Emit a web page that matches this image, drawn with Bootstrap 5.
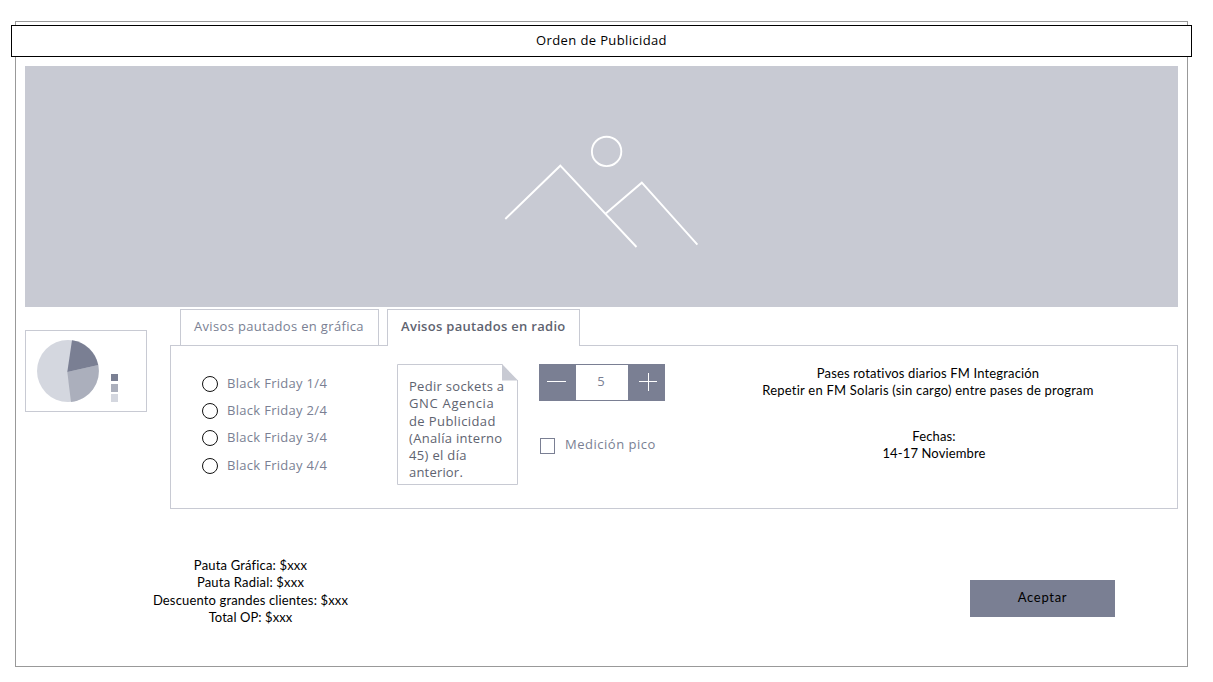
<!DOCTYPE html>
<html lang="es">
<head>
<meta charset="utf-8">
<meta name="viewport" content="width=device-width, initial-scale=1">
<title>Orden de Publicidad</title>
<link href="https://cdn.jsdelivr.net/npm/bootstrap@5.3.0/dist/css/bootstrap.min.css" rel="stylesheet">
<style>
:root{--slate:#7a7f93;--line:#c8cad3;--ink:#5e6370}
body{font-family:"Open Sans",sans-serif;font-size:13px;line-height:17.3px;background:#fff;color:#000;overflow:hidden}
.screen{width:1173px;height:646px;margin:21px 0 0 15px;border:1px solid #999}
.titlebar{height:32px;margin:3px -5px 0;border:1px solid #000;letter-spacing:.38px}
.hero{height:241px;margin:9px 9px 0;background:#c8cad3}
.hero svg{margin:69px 0 0 479px}
.chart-box{width:122px;height:82px;margin-top:23px;border:1px solid var(--line)}
.work{margin:0 9px;gap:23px}
.work-main{width:1008px;padding-top:2px}
.nav-tabs{--bs-nav-tabs-border-width:0;gap:8px;margin-left:10px}
.nav-tabs .nav-link{height:36px;padding:8px 0 0 13px;border:1px solid var(--line)!important;border-bottom:0!important;border-radius:0;color:var(--slate);margin:0;letter-spacing:.33px}
.nav-tabs .nav-link.first{width:199px}
.nav-tabs .nav-link.active{width:193px;height:37px;margin-bottom:-1px;color:var(--ink);font-weight:600;letter-spacing:.3px;position:relative}
.pane{height:164px;border:1px solid var(--line)}
.radios{width:195px;margin:29px 0 0 31px}
.radios .form-check,.pico{min-height:0;margin:0;padding:0;color:var(--slate);letter-spacing:.3px}
.radios .form-check{height:27.2px;gap:9px}
.form-check .form-check-input{float:none;margin:0;background:#fff}
.radios .form-check-input{width:16px;height:16px;border:1.25px solid #111;margin-top:1px}
.note{width:121px;height:121px;margin-top:18px;padding:14px 0 0 12px;color:var(--ink);white-space:nowrap}
.note svg{left:0;top:0}
.note span{position:relative}
.counter{margin:18px 0 0 21px;width:126px}
.stepper{height:37px;border:1px solid var(--slate);color:var(--slate)}
.stepper .btn{width:37px;margin:-1px;padding:0;border:0;border-radius:0;background:var(--slate)}
.stepper .amount{padding:8px 2px 0 0}
.pico{margin:35px 0 0 1px;gap:10px;letter-spacing:.52px;white-space:nowrap}
.pico .form-check-input{width:15px;height:16px;border:1px solid var(--slate);border-radius:0;margin-top:2px}
.plain{font-family:Lato,"Open Sans",sans-serif;font-variant-ligatures:none;white-space:nowrap}
.brief{width:340px;margin:19px 0 0 93px}
.dates{padding-left:12px;margin-top:28px}
.totals{width:221px;margin:48px 0 0 124px}
.accept{width:145px;height:37px;margin:71px 72px 0 0;padding:0 0 1px;border:0;border-radius:0;background:var(--slate);color:#000;font-size:13px;letter-spacing:.7px}
</style>
</head>
<body>
<main class="screen d-flex flex-column">
  <header class="titlebar bg-white d-flex align-items-center justify-content-center flex-shrink-0">Orden de Publicidad</header>
  <section class="hero flex-shrink-0">
    <svg class="d-block" width="196" height="114" viewBox="504 135 196 114" fill="none" stroke="#fff" stroke-width="1.9">
      <circle cx="606.6" cy="151.4" r="14.7"/>
      <path d="M505.3 219 560.3 165.7 636.5 247M605.8 213.5 641.8 182.7 697.4 244.7"/>
    </svg>
  </section>
  <section class="work d-flex">
    <div class="chart-box flex-shrink-0">
      <svg class="d-block" width="120" height="80" viewBox="26 331 120 80">
        <circle cx="68" cy="371" r="31" fill="#d4d7df"/>
        <path d="M67.3 372 98.2 365A31 31 0 0 1 71 402Z" fill="#abafbc"/>
        <path d="M67.3 372 72 340.3A31 31 0 0 1 98.2 365Z" fill="#7a7f93"/>
        <path d="M111 374h7v7h-7z" fill="#7a7f93"/>
        <path d="M111 384h7v8h-7z" fill="#abafbc"/>
        <path d="M111 394h7v8h-7z" fill="#d4d7df"/>
      </svg>
    </div>
    <div class="work-main flex-shrink-0">
      <nav class="nav nav-tabs">
        <a class="nav-link first">Avisos pautados en gráfica</a>
        <a class="nav-link active">Avisos pautados en radio</a>
      </nav>
      <div class="pane d-flex align-items-start">
        <div class="radios flex-shrink-0">
          <label class="form-check d-flex"><input class="form-check-input" type="radio" name="aviso"><span>Black Friday 1/4</span></label>
          <label class="form-check d-flex"><input class="form-check-input" type="radio" name="aviso"><span>Black Friday 2/4</span></label>
          <label class="form-check d-flex"><input class="form-check-input" type="radio" name="aviso"><span>Black Friday 3/4</span></label>
          <label class="form-check d-flex"><input class="form-check-input" type="radio" name="aviso"><span>Black Friday 4/4</span></label>
        </div>
        <div class="note position-relative flex-shrink-0">
          <svg class="position-absolute" width="121" height="121" fill="none">
            <path d="M105.5.5H.5V120.5H120.5V16" stroke="#c8cad3"/>
            <path d="M105 0 121 16.5H105Z" fill="#c8cad3"/>
          </svg>
          <span style="letter-spacing:.3px">Pedir sockets a</span><br>
          <span style="letter-spacing:.67px">GNC Agencia</span><br>
          <span style="letter-spacing:.4px">de Publicidad</span><br>
          <span style="letter-spacing:.32px">(Analía interno</span><br>
          <span style="letter-spacing:.33px">45) el día</span><br>
          <span style="letter-spacing:.19px">anterior.</span>
        </div>
        <div class="counter flex-shrink-0">
          <div class="stepper d-flex justify-content-between">
            <button class="btn" type="button" aria-label="Menos"><svg class="d-block" width="37" height="37" stroke="#fff"><path d="M8 17.5H27"/></svg></button>
            <span class="amount">5</span>
            <button class="btn" type="button" aria-label="Más"><svg class="d-block" width="37" height="37" stroke="#fff"><path d="M11 17.5H29M20.5 9V27"/></svg></button>
          </div>
          <label class="pico form-check d-flex"><input class="form-check-input" type="checkbox"><span>Medición pico</span></label>
        </div>
        <div class="brief plain text-center flex-shrink-0">
          <div style="letter-spacing:.15px">Pases rotativos diarios FM Integración</div>
          <div style="letter-spacing:.22px">Repetir en FM Solaris (sin cargo) entre pases de program</div>
          <div class="dates" style="letter-spacing:.13px">Fechas:<br>14-17 Noviembre</div>
        </div>
      </div>
    </div>
  </section>
  <footer class="d-flex justify-content-between align-items-start">
    <div class="totals plain text-center">
      <div style="letter-spacing:.17px">Pauta Gráfica: $xxx</div>
      <div style="letter-spacing:.19px">Pauta Radial: $xxx</div>
      <div style="letter-spacing:.15px">Descuento grandes clientes: $xxx</div>
      <div style="letter-spacing:.08px">Total OP: $xxx</div>
    </div>
    <button class="accept btn plain" type="button">Aceptar</button>
  </footer>
</main>
<script src="https://cdn.jsdelivr.net/npm/bootstrap@5.3.0/dist/js/bootstrap.bundle.min.js"></script>
</body>
</html>
